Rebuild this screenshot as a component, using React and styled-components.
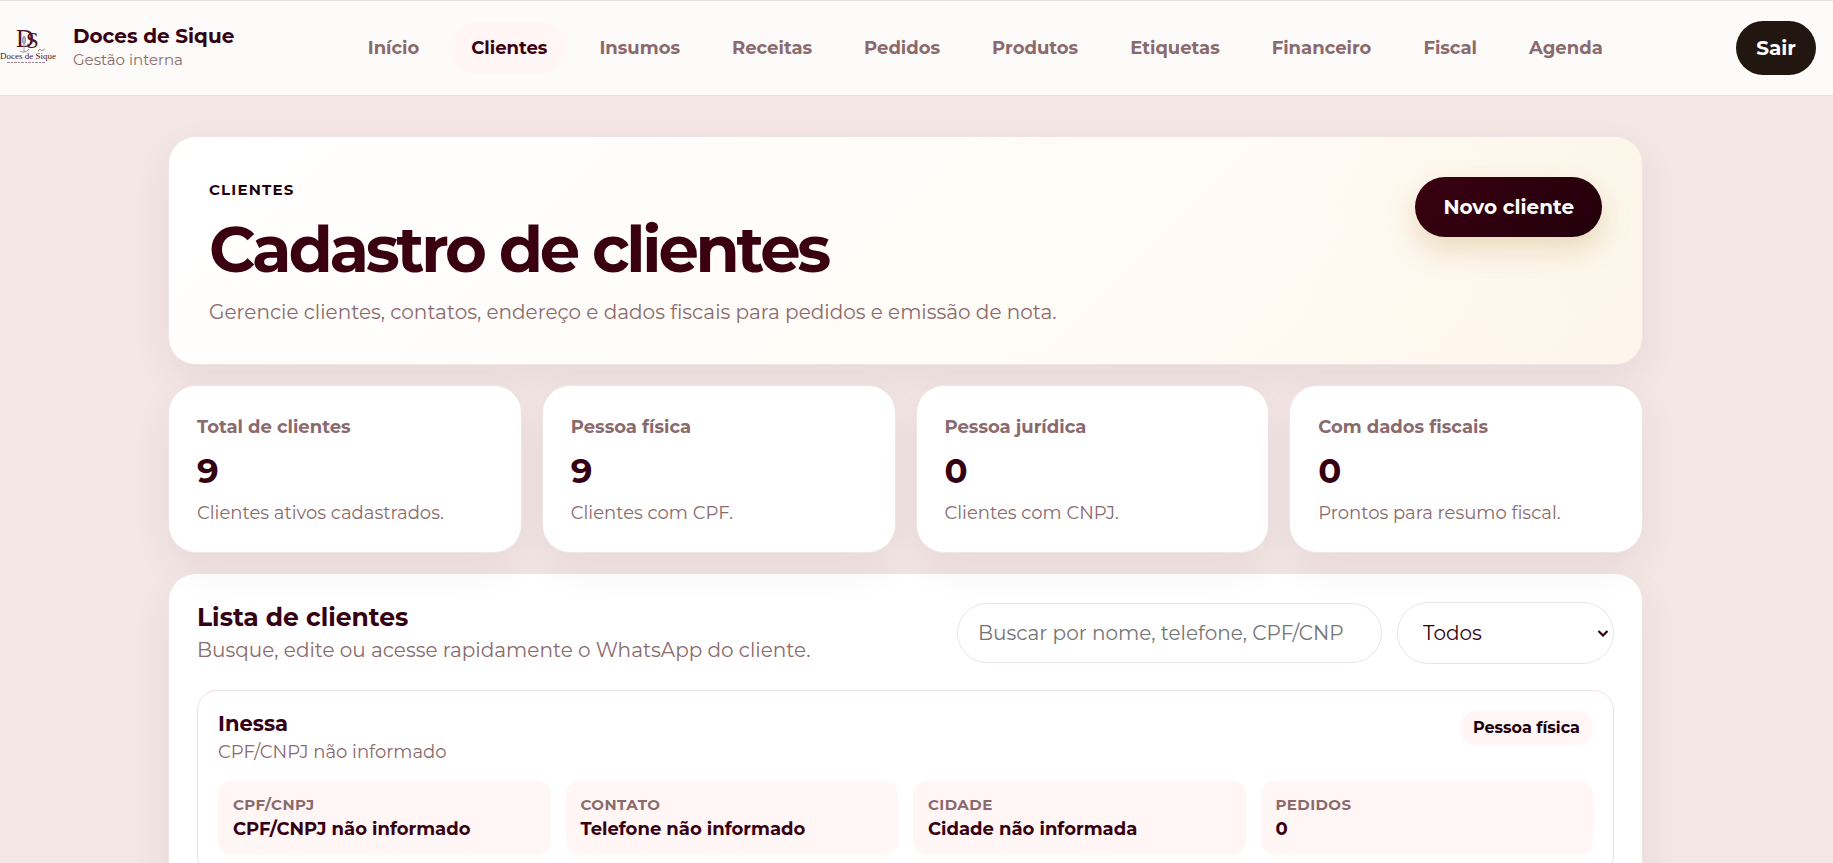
import React, { useState } from 'react'
import styled, { createGlobalStyle } from 'styled-components'


const GlobalStyle = createGlobalStyle`
    * {
        box-sizing: border-box;
    }

    body {
        margin: 0;
        background: #f4e6e5;
        color: #350011;
        font-family: Montserrat, Inter, sans-serif;
        font-size: 18px;
    }

    h1, h2, h3, p, dl, dd {
        margin: 0;
    }

    button, input, select {
        font-family: inherit;
    }
`

const Topbar = styled.header`
    display: flex;
    justify-content: space-between;
    align-items: center;
    height: 96px;
    padding-right: 17px;
    background: #fdfbf9;
    border-top: 1px solid #e1e4e1;
    border-bottom: 1px solid #e6e1df;
`

const Brand = styled.a`
    display: flex;
    align-items: center;
    gap: 17px;
    color: inherit;
    text-decoration: none;
`

const BrandName = styled.strong`
    display: block;
    font-size: 20px;
    font-weight: 700;
    line-height: 24px;
`

const BrandNote = styled.span`
    display: block;
    color: #8a6a6c;
    font-size: 15px;
    line-height: 24px;
`

const Nav = styled.nav`
    display: flex;
    gap: 12px;
`

const NavLink = styled.a`
    padding: 0 20px;
    border-radius: 26px;
    background: ${(p) => (p.$active ? '#fff6f5' : 'transparent')};
    color: ${(p) => (p.$active ? '#3a0012' : '#8a6a6c')};
    font-weight: 700;
    line-height: 52px;
    text-decoration: none;
`

const LogoutButton = styled.button`
    height: 54px;
    padding: 0 20px;
    border: 0;
    border-radius: 27px;
    background: #211710;
    color: #fff;
    font-size: 20px;
    font-weight: 700;
`

const Main = styled.main`
    padding: 40px 22px 40px 0;
`

const Container = styled.div`
    display: flex;
    flex-direction: column;
    gap: 20px;
    max-width: 1475px;
    margin: 0 auto;
`

const Panel = styled.section`
    padding: 28px;
    background: #fff;
    border: 1px solid #efe5e4;
    border-radius: 28px;
    box-shadow: 0 14px 40px rgba(20, 0, 6, 0.06);
`

const Hero = styled(Panel)`
    display: flex;
    justify-content: space-between;
    align-items: flex-start;
    padding: 40px;
    background:
        radial-gradient(circle at top right, rgba(249, 245, 228, 0.5), transparent 380px),
        linear-gradient(135deg, #ffffff 0%, #fffcf8 55%, #fff6ec 100%);
`

const Eyebrow = styled.p`
    color: #22000b;
    font-size: 15px;
    font-weight: 700;
    letter-spacing: 0.08em;
    line-height: 26px;
    text-transform: uppercase;
`

const PageTitle = styled.h1`
    margin: 14px 0 19px;
    color: #3a0012;
    font-size: 64px;
    font-weight: 700;
    letter-spacing: -0.05em;
    line-height: 64px;
`

const Lead = styled.p`
    color: #8a6a6c;
    font-size: 20px;
    line-height: ${(p) => p.$lineHeight};
`

const PrimaryButton = styled.button`
    height: 60px;
    padding: 0 28px;
    border: 0;
    border-radius: 30px;
    background: linear-gradient(135deg, #3a0012, #22000b);
    box-shadow: 0 12px 28px rgba(184, 145, 70, 0.28);
    color: #fff;
    font-size: 20px;
    font-weight: 700;
`

const Stats = styled.div`
    position: relative;
    z-index: 1;
    display: grid;
    grid-template-columns: repeat(4, 1fr);
    gap: 20px;
`

const StatCard = styled(Panel)`
    display: flex;
    flex-direction: column;
    gap: 13px;
`

const StatLabel = styled.span`
    color: #8a6a6c;
    font-weight: 700;
    line-height: 26px;
`

const StatValue = styled.strong`
    font-size: 34px;
    font-weight: 700;
    line-height: 36px;
`

const Muted = styled.p`
    color: #8a6a6c;
    line-height: 22px;
`

const ListHeader = styled.div`
    display: flex;
    justify-content: space-between;
    align-items: center;
    margin-bottom: 26px;
`

const ListTitle = styled.h2`
    margin-bottom: 4px;
    font-size: 25px;
    font-weight: 700;
    line-height: 30px;
`

const Filters = styled.div`
    display: flex;
    align-items: center;
    gap: 15px;
`

const SearchInput = styled.input`
    width: 425px;
    height: 60px;
    padding: 0 20px;
    border: 1px solid #ece4e4;
    border-radius: 30px;
    background: transparent;
    color: #350011;
    font-size: 20px;
`

const SelectWrapper = styled.div`
    position: relative;

    svg {
        position: absolute;
        top: 27px;
        right: 5px;
        pointer-events: none;
    }
`

const TypeSelect = styled.select`
    appearance: none;
    display: block;
    width: 217px;
    height: 62px;
    padding: 0 25px;
    border: 1px solid #ece4e4;
    border-radius: 31px;
    background: transparent;
    color: #350011;
    font-size: 20px;
`

const ClientCard = styled.article`
    padding: 20px;
    border: 1px solid #ece2e3;
    border-radius: 20px;
`

const ClientTop = styled.div`
    display: flex;
    justify-content: space-between;
    align-items: flex-start;
    margin-bottom: 18px;
`

const ClientName = styled.h3`
    margin-bottom: 5px;
    font-size: 21px;
    font-weight: 700;
    line-height: 25px;
`

const Badge = styled.span`
    padding: 0 13px;
    border-radius: 17px;
    background: #fff6f5;
    color: #22000b;
    font-size: 16px;
    font-weight: 700;
    line-height: 34px;
`

const InfoGrid = styled.dl`
    display: grid;
    grid-template-columns: repeat(4, 1fr);
    gap: 15px;
`

const InfoTile = styled.div`
    padding: 14px 15px;
    border-radius: 14px;
    background: #fff6f5;
    font-weight: 700;
`

const InfoLabel = styled.dt`
    margin-bottom: 2px;
    color: #8a6a6c;
    font-size: 15px;
    letter-spacing: 0.03em;
    line-height: 20px;
    text-transform: uppercase;
`

const InfoValue = styled.dd`
    line-height: 24px;
`


const links = ['Início', 'Clientes', 'Insumos', 'Receitas', 'Pedidos', 'Produtos', 'Etiquetas', 'Financeiro', 'Fiscal', 'Agenda']

const stats = [
    { label: 'Total de clientes', value: 9, note: 'Clientes ativos cadastrados.' },
    { label: 'Pessoa física', value: 9, note: 'Clientes com CPF.' },
    { label: 'Pessoa jurídica', value: 0, note: 'Clientes com CNPJ.' },
    { label: 'Com dados fiscais', value: 0, note: 'Prontos para resumo fiscal.' },
]

const clients = [
    {
        name: 'Inessa',
        document: 'CPF/CNPJ não informado',
        type: 'Pessoa física',
        info: [
            ['CPF/CNPJ', 'CPF/CNPJ não informado'],
            ['Contato', 'Telefone não informado'],
            ['Cidade', 'Cidade não informada'],
            ['Pedidos', '0'],
        ],
    },
]


const Logo = () => (
    <svg width='56' height='56' viewBox='0 0 56 56' aria-hidden='true'>
        <g fontFamily='Liberation Serif, serif' fill='#4b1426'>
            <text x='16' y='27' fontSize='25'>D</text>
            <text x='26' y='28' fontSize='23'>S</text>
            <text x='0' y='39' fontSize='9'>Doces de Sique</text>
        </g>
        <g fill='none' stroke='#9a9aa4' strokeWidth='1'>
            <ellipse cx='24' cy='20' rx='1.500' ry='4' fill='#b4b4bc' />
            <path d='M24 24v8M20 31c3 2 7 1 9-2' />
            <path d='M38 31l2-2 2 2 3-2' stroke='#a58a92' />
        </g>
        <path d='M7 42.500h38' stroke='#7d5562' strokeDasharray='3 1 2 1' opacity='.7' />
    </svg>
)

const Chevron = () => (
    <svg width='12' height='9' viewBox='0 0 12 9' aria-hidden='true'>
        <path d='M1.500 2l4.500 4.500L10.500 2' fill='none' stroke='#350011' strokeWidth='2.200' />
    </svg>
)

const StatItem = ({ label, value, note }) => (
    <StatCard>
        <StatLabel>{label}</StatLabel>
        <StatValue>{value}</StatValue>
        <Muted>{note}</Muted>
    </StatCard>
)

const Client = ({ client }) => (
    <ClientCard>
        <ClientTop>
            <div>
                <ClientName>{client.name}</ClientName>
                <Muted>{client.document}</Muted>
            </div>
            <Badge>{client.type}</Badge>
        </ClientTop>
        <InfoGrid>
            {client.info.map(([label, value]) => (
                <InfoTile key={label}>
                    <InfoLabel>{label}</InfoLabel>
                    <InfoValue>{value}</InfoValue>
                </InfoTile>
            ))}
        </InfoGrid>
    </ClientCard>
)

const App = () => {

    const [search, setSearch] = useState('')
    const [type, setType] = useState('Todos')

    const visible = clients.filter((client) => {
        const matchesType = type === 'Todos' || client.type === type
        return matchesType && client.name.toLowerCase().includes(search.toLowerCase())
    })

    return (
        <>
            <GlobalStyle />
            <Topbar>
                <Brand href='#inicio'>
                    <Logo />
                    <span>
                        <BrandName>Doces de Sique</BrandName>
                        <BrandNote>Gestão interna</BrandNote>
                    </span>
                </Brand>
                <Nav>
                    {links.map((link) => (
                        <NavLink key={link} href={`#${link.toLowerCase()}`} $active={link === 'Clientes'}>
                            {link}
                        </NavLink>
                    ))}
                </Nav>
                <LogoutButton type='button'>Sair</LogoutButton>
            </Topbar>

            <Main>
                <Container>
                    <Hero>
                        <div>
                            <Eyebrow>Clientes</Eyebrow>
                            <PageTitle>Cadastro de clientes</PageTitle>
                            <Lead $lineHeight='24px'>
                                Gerencie clientes, contatos, endereço e dados fiscais para pedidos e emissão de nota.
                            </Lead>
                        </div>
                        <PrimaryButton type='button'>Novo cliente</PrimaryButton>
                    </Hero>

                    <Stats>
                        {stats.map((stat) => <StatItem key={stat.label} {...stat} />)}
                    </Stats>

                    <Panel>
                        <ListHeader>
                            <div>
                                <ListTitle>Lista de clientes</ListTitle>
                                <Lead $lineHeight='28px'>Busque, edite ou acesse rapidamente o WhatsApp do cliente.</Lead>
                            </div>
                            <Filters>
                                <SearchInput
                                    type='search'
                                    aria-label='Buscar cliente'
                                    placeholder='Buscar por nome, telefone, CPF/CNPJ'
                                    value={search}
                                    onChange={(e) => setSearch(e.target.value)}
                                />
                                <SelectWrapper>
                                    <TypeSelect aria-label='Tipo de cliente' value={type} onChange={(e) => setType(e.target.value)}>
                                        <option>Todos</option>
                                        <option>Pessoa física</option>
                                        <option>Pessoa jurídica</option>
                                    </TypeSelect>
                                    <Chevron />
                                </SelectWrapper>
                            </Filters>
                        </ListHeader>
                        {visible.map((client) => <Client key={client.name} client={client} />)}
                    </Panel>
                </Container>
            </Main>
        </>
    )
}

export default App
